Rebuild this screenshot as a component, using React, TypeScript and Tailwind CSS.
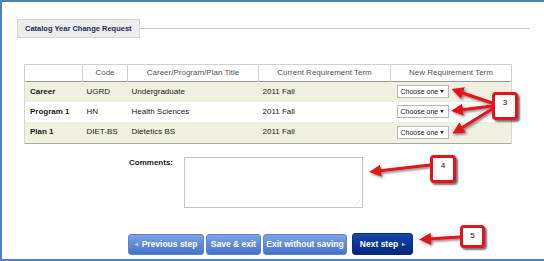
import React from "react";

const rows = [
  { label: "Career", code: "UGRD", title: "Undergraduate", term: "2011 Fall", bg: "bg-[#f0f0e1]" },
  { label: "Program 1", code: "HN", title: "Health Sciences", term: "2011 Fall", bg: "bg-white" },
  { label: "Plan 1", code: "DIET-BS", title: "Dietetics BS", term: "2011 Fall", bg: "bg-[#f0f0e1]" },
];

function Select() {
  return (
    <div className="flex items-center w-[52px] h-[13px] bg-white border border-[#b8b8b8] pl-[3px] pr-[4px] justify-between text-[7px] leading-none text-[#222] whitespace-nowrap">
      <span>Choose one</span>
      <span className="w-0 h-0 border-l-[2.5px] border-r-[2.5px] border-t-[3px] border-l-transparent border-r-transparent border-t-[#333]"></span>
    </div>
  );
}

function Callout({ n, className }: { n: string; className: string }) {
  return (
    <div
      className={`absolute flex items-start justify-center pt-[4px] bg-white border-[3px] border-[#e3121b] rounded-[4px] text-[8px] leading-none text-[#111] shadow-[2px_2px_2px_rgba(0,0,0,0.55)] ${className}`}
    >
      {n}
    </div>
  );
}

export default function App() {
  return (
    <div className="relative w-[544px] h-[261px] overflow-hidden bg-white border-l-2 border-t-2 border-b-2 border-[#4f81bd] font-['Liberation_Sans',Arial,sans-serif]">
      {/* header */}
      <div className="flex items-center pt-[17px] pl-[15px] pr-[14px]">
        <div className="h-[19px] flex items-center px-[7px] bg-[#ececec] border border-[#d6d6d6] text-[7.5px] font-bold text-[#1c2b55] whitespace-nowrap">
          Catalog Year Change Request
        </div>
        <div className="flex-1 h-px bg-[#cacaca]"></div>
      </div>

      {/* table */}
      <table className="mt-[26px] ml-[22px] w-[487px] border-collapse table-fixed text-[8px]">
        <colgroup>
          <col className="w-[58px]" />
          <col className="w-[45px]" />
          <col className="w-[131px]" />
          <col className="w-[132px]" />
          <col className="w-[121px]" />
        </colgroup>
        <thead>
          <tr className="h-[17px] text-[#555] border-b border-[#9a9a9a]">
            <th className="border-t border-l border-[#d0d0d0] font-normal"></th>
            <th className="border-t border-l border-[#d0d0d0] font-normal text-center">Code</th>
            <th className="border-t border-l border-[#d0d0d0] font-normal text-center">Career/Program/Plan Title</th>
            <th className="border-t border-l border-[#d0d0d0] font-normal text-center">Current Requirement Term</th>
            <th className="border-t border-l border-r border-[#d0d0d0] font-normal text-center">New Requirement Term</th>
          </tr>
        </thead>
        <tbody className="text-[#1a1a1a]">
          {rows.map((r, i) => (
            <tr key={r.label} className={`${i === 2 ? "h-[22px] border-b border-[#a8a8a8]" : "h-[20px]"} ${r.bg}`}>
              <td className="pl-[5px] font-bold border-l border-[#d6d6d6]">{r.label}</td>
              <td className="pl-[4px]">{r.code}</td>
              <td className="pl-[4px]">{r.title}</td>
              <td className="pl-[4px]">{r.term}</td>
              <td className="pl-[6px] border-r border-[#d6d6d6]">
                <Select />
              </td>
            </tr>
          ))}
        </tbody>
      </table>

      {/* comments */}
      <div className="flex items-start mt-[13px]">
        <div className="w-[171px] text-right text-[8px] leading-none font-bold text-[#1a1a1a] pt-[2px]">Comments:</div>
        <div className="relative ml-[11px] w-[179px] h-[51px] border border-[#c4c4c4] bg-white">
          <div className="absolute right-[2px] bottom-[2px] text-[5px] leading-none text-[#aaa]">⋰</div>
        </div>
      </div>

      {/* buttons */}
      <div className="flex items-center mt-[25px] ml-[126px]">
        <button className="h-[21px] w-[76px] rounded-[3px] bg-gradient-to-b from-[#7ea3e6] to-[#4472c7] border border-[#5a84cf] text-white text-[8.5px] font-bold flex items-center justify-center gap-[4px]">
          <span className="text-[6px] text-[#c6d6f3]">◂</span>Previous step
        </button>
        <button className="ml-[2px] h-[21px] w-[55px] rounded-[3px] bg-gradient-to-b from-[#7ea3e6] to-[#4472c7] border border-[#5a84cf] text-white text-[8.5px] font-bold">
          Save &amp; exit
        </button>
        <button className="ml-[2px] h-[21px] w-[84px] rounded-[3px] bg-gradient-to-b from-[#7ea3e6] to-[#4472c7] border border-[#5a84cf] text-white text-[8.5px] font-bold">
          Exit without saving
        </button>
        <button className="ml-[5px] h-[22px] w-[61px] rounded-[3px] bg-gradient-to-b from-[#1548ad] to-[#06257a] border border-[#0a2d80] text-white text-[8.5px] font-bold flex items-center justify-center gap-[4px]">
          Next step<span className="text-[6px] text-[#b9c9ee]">▸</span>
        </button>
      </div>

      {/* annotations */}
      <svg className="absolute left-[-2px] top-[-2px]" width="544" height="261" viewBox="0 0 544 261">
        <defs>
          <marker id="ah" markerWidth="4" markerHeight="4" refX="1" refY="2" orient="auto" markerUnits="strokeWidth">
            <path d="M0,0 L4,2 L0,4 z" fill="#e3121b" />
          </marker>
          <filter id="sh" x="-20%" y="-50%" width="140%" height="200%">
            <feDropShadow dx="1.5" dy="1.5" stdDeviation="0.8" floodColor="#000" floodOpacity="0.5" />
          </filter>
        </defs>
        <g stroke="#e3121b" strokeWidth="3" fill="none" filter="url(#sh)" strokeLinecap="round">
          <line x1="492" y1="103" x2="460" y2="92" markerEnd="url(#ah)" />
          <line x1="492" y1="106" x2="460" y2="110" markerEnd="url(#ah)" />
          <line x1="492" y1="109" x2="460" y2="129" markerEnd="url(#ah)" />
          <line x1="430" y1="165" x2="378" y2="171" markerEnd="url(#ah)" />
          <line x1="460" y1="237" x2="428" y2="239" markerEnd="url(#ah)" />
        </g>
      </svg>
      <Callout n="3" className="left-[490px] top-[90px] w-[26px] h-[28px]" />
      <Callout n="4" className="left-[428px] top-[153px] w-[26px] h-[28px]" />
      <Callout n="5" className="left-[458px] top-[223px] w-[25px] h-[23px]" />
    </div>
  );
}
